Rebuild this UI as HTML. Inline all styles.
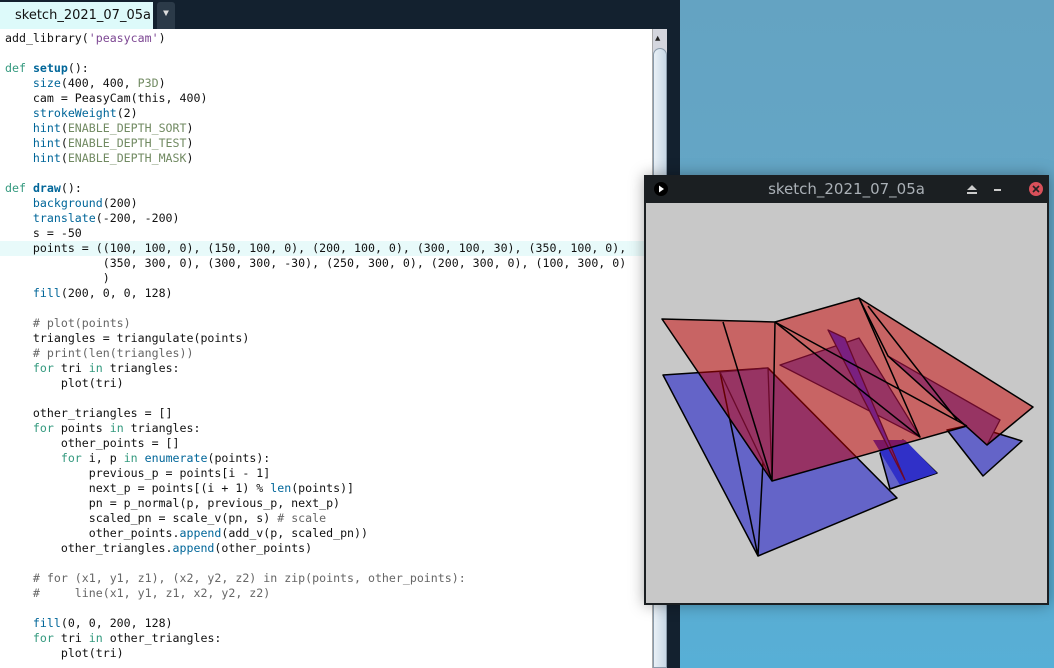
<!DOCTYPE html>
<html><head><meta charset="utf-8"><style>
*{margin:0;padding:0;box-sizing:border-box}
body{width:1054px;height:668px;overflow:hidden;position:relative;background:linear-gradient(180deg,#64a3c2 0%,#63a8c9 50%,#57afd6 100%);font-family:"Liberation Mono",monospace}
#frame{position:absolute;left:0;top:0;width:680px;height:668px;background:#13212f}
#tab{position:absolute;left:0;top:2px;width:153px;height:27px;background:#ddfafa;font:13px "DejaVu Sans",sans-serif;color:#111;padding:6px 0 0 15px;white-space:nowrap;overflow:hidden}
#dd{position:absolute;left:157px;top:2px;width:18px;height:27px;background:#2b3a48;border-radius:3px 3px 0 0;color:#ddd;font-size:10px;text-align:center;padding-top:7px}
#editor{position:absolute;left:0;top:29px;width:652px;height:639px;background:#fff}
#hl{position:absolute;left:0;top:212px;width:652px;height:15px;background:#e8fafa}
pre{position:absolute;left:5px;top:2px;font:11.6px/15px "DejaVu Sans Mono",monospace;color:#111}
.k{color:#33997e}.f{color:#006699}.s{color:#7d4793}.c{color:#718a62}.m{color:#666}
#sb{position:absolute;left:652px;top:29px;width:15px;height:639px;background:#d4d6de;border-left:1px solid #aaa}
#thumb{position:absolute;left:653px;top:48px;width:14px;height:620px;background:linear-gradient(90deg,#e9f0f6,#c8d8e6);border-radius:7px 7px 0 0;border:1px solid #8a9bab}
#arrow{position:absolute;left:655px;top:34px;font-size:9px;color:#222}
#win{position:absolute;left:644px;top:175px;width:405px;height:430px;background:#1b1f22;box-shadow:0 0 14px rgba(0,0,0,.35)}
#title{position:absolute;left:0;top:0;width:405px;height:28px;color:#aab0b6;font:15px "DejaVu Sans",sans-serif;text-align:center;line-height:28px}
#canvas{position:absolute;left:2px;top:28px;width:401px;height:400px;background:#c8c8c8}
</style></head><body>
<div id="frame"></div>
<div id="tab">sketch_2021_07_05a</div>
<div id="dd">▼</div>
<div id="editor"><div id="hl"></div><pre>add_library(<span class="s">'peasycam'</span>)

<span class="k">def</span> <b class="f">setup</b>():
    <span class="f">size</span>(400, 400, <span class="c">P3D</span>)
    cam = PeasyCam(this, 400)
    <span class="f">strokeWeight</span>(2)
    <span class="f">hint</span>(<span class="c">ENABLE_DEPTH_SORT</span>)
    <span class="f">hint</span>(<span class="c">ENABLE_DEPTH_TEST</span>)
    <span class="f">hint</span>(<span class="c">ENABLE_DEPTH_MASK</span>)

<span class="k">def</span> <b class="f">draw</b>():
    <span class="f">background</span>(200)
    <span class="f">translate</span>(-200, -200)
    s = -50
    points = ((100, 100, 0), (150, 100, 0), (200, 100, 0), (300, 100, 30), (350, 100, 0),
              (350, 300, 0), (300, 300, -30), (250, 300, 0), (200, 300, 0), (100, 300, 0)
              )
    <span class="f">fill</span>(200, 0, 0, 128)

    <span class="m"># plot(points)</span>
    triangles = triangulate(points)
    <span class="m"># print(len(triangles))</span>
    <span class="k">for</span> tri <span class="k">in</span> triangles:
        plot(tri)

    other_triangles = []
    <span class="k">for</span> points <span class="k">in</span> triangles:
        other_points = []
        <span class="k">for</span> i, p <span class="k">in</span> <span class="f">enumerate</span>(points):
            previous_p = points[i - 1]
            next_p = points[(i + 1) % <span class="f">len</span>(points)]
            pn = p_normal(p, previous_p, next_p)
            scaled_pn = scale_v(pn, s) <span class="m"># scale</span>
            other_points.<span class="f">append</span>(add_v(p, scaled_pn))
        other_triangles.<span class="f">append</span>(other_points)

    <span class="m"># for (x1, y1, z1), (x2, y2, z2) in zip(points, other_points):</span>
    <span class="m">#     line(x1, y1, z1, x2, y2, z2)</span>

    <span class="f">fill</span>(0, 0, 200, 128)
    <span class="k">for</span> tri <span class="k">in</span> other_triangles:
        plot(tri)</pre></div>
<div id="sb"></div><div id="thumb"></div><div id="arrow">▲</div>
<div id="win">
<div id="title">sketch_2021_07_05a</div>
<svg style="position:absolute;left:0;top:0" width="405" height="28">
<circle cx="17" cy="14" r="7" fill="#000"/><path d="M15 10.5 L20 14 L15 17.5Z" fill="#fff"/>
<path d="M323 15 L328 10 L333 15Z M323 17 h10 v2 h-10Z" fill="#ccc"/>
<rect x="350" y="14" width="7" height="2" fill="#ccc"/>
<circle cx="392" cy="14" r="7" fill="#d9505a"/><path d="M389 11 L395 17 M395 11 L389 17" stroke="#222" stroke-width="1.6"/>
</svg>
<div id="canvas"></div>
<svg style="position:absolute;left:-644px;top:-175px" width="1054" height="668">
<g stroke="#000" stroke-width="1.5" stroke-linejoin="round">
<polygon points="663,375 768,368 897,498 758,556" fill="#6464c8"/>
<polygon points="880,453 903,440 937,473 890,489" fill="#6464c8"/>
<polygon points="873,440 905,440 937,473 900,485" fill="#3030c8" stroke="none"/>
<polygon points="947,430 970,425 1022,441 983,476" fill="#6464c8"/>
<path d="M720,372 L758,556 M730,420 L758,556 M768,368 L758,556" fill="none"/>
</g>
<g fill="rgb(200,0,0)" fill-opacity="0.5" stroke="none">
<polygon points="662,319 775,322 859,298 1033,407 987,445 950,410 967,426 772,481"/>
</g>
<g fill="#973463" stroke="#6a0a2a" stroke-width="1.3" stroke-linejoin="round">
<polygon points="720,372 768,368 772,481"/>
<polygon points="780,365 859,338 920,437"/>
<polygon points="888,356 1000,420 987,445"/>
<polygon points="828,330 845,338 905,480" fill="#7a2080"/>
</g>
<g stroke="#000" stroke-width="1.5" fill="none" stroke-linejoin="round">
<polygon points="662,319 775,322 772,481"/>
<path d="M723,322 L772,481"/>
<polygon points="775,322 859,298 920,437"/>
<path d="M775,322 L967,426 M772,481 L967,426"/>
<polygon points="859,298 1033,407 987,445 888,356"/>
<path d="M868,306 L957,420"/>
</g>
</svg>
</div>
</body></html>
